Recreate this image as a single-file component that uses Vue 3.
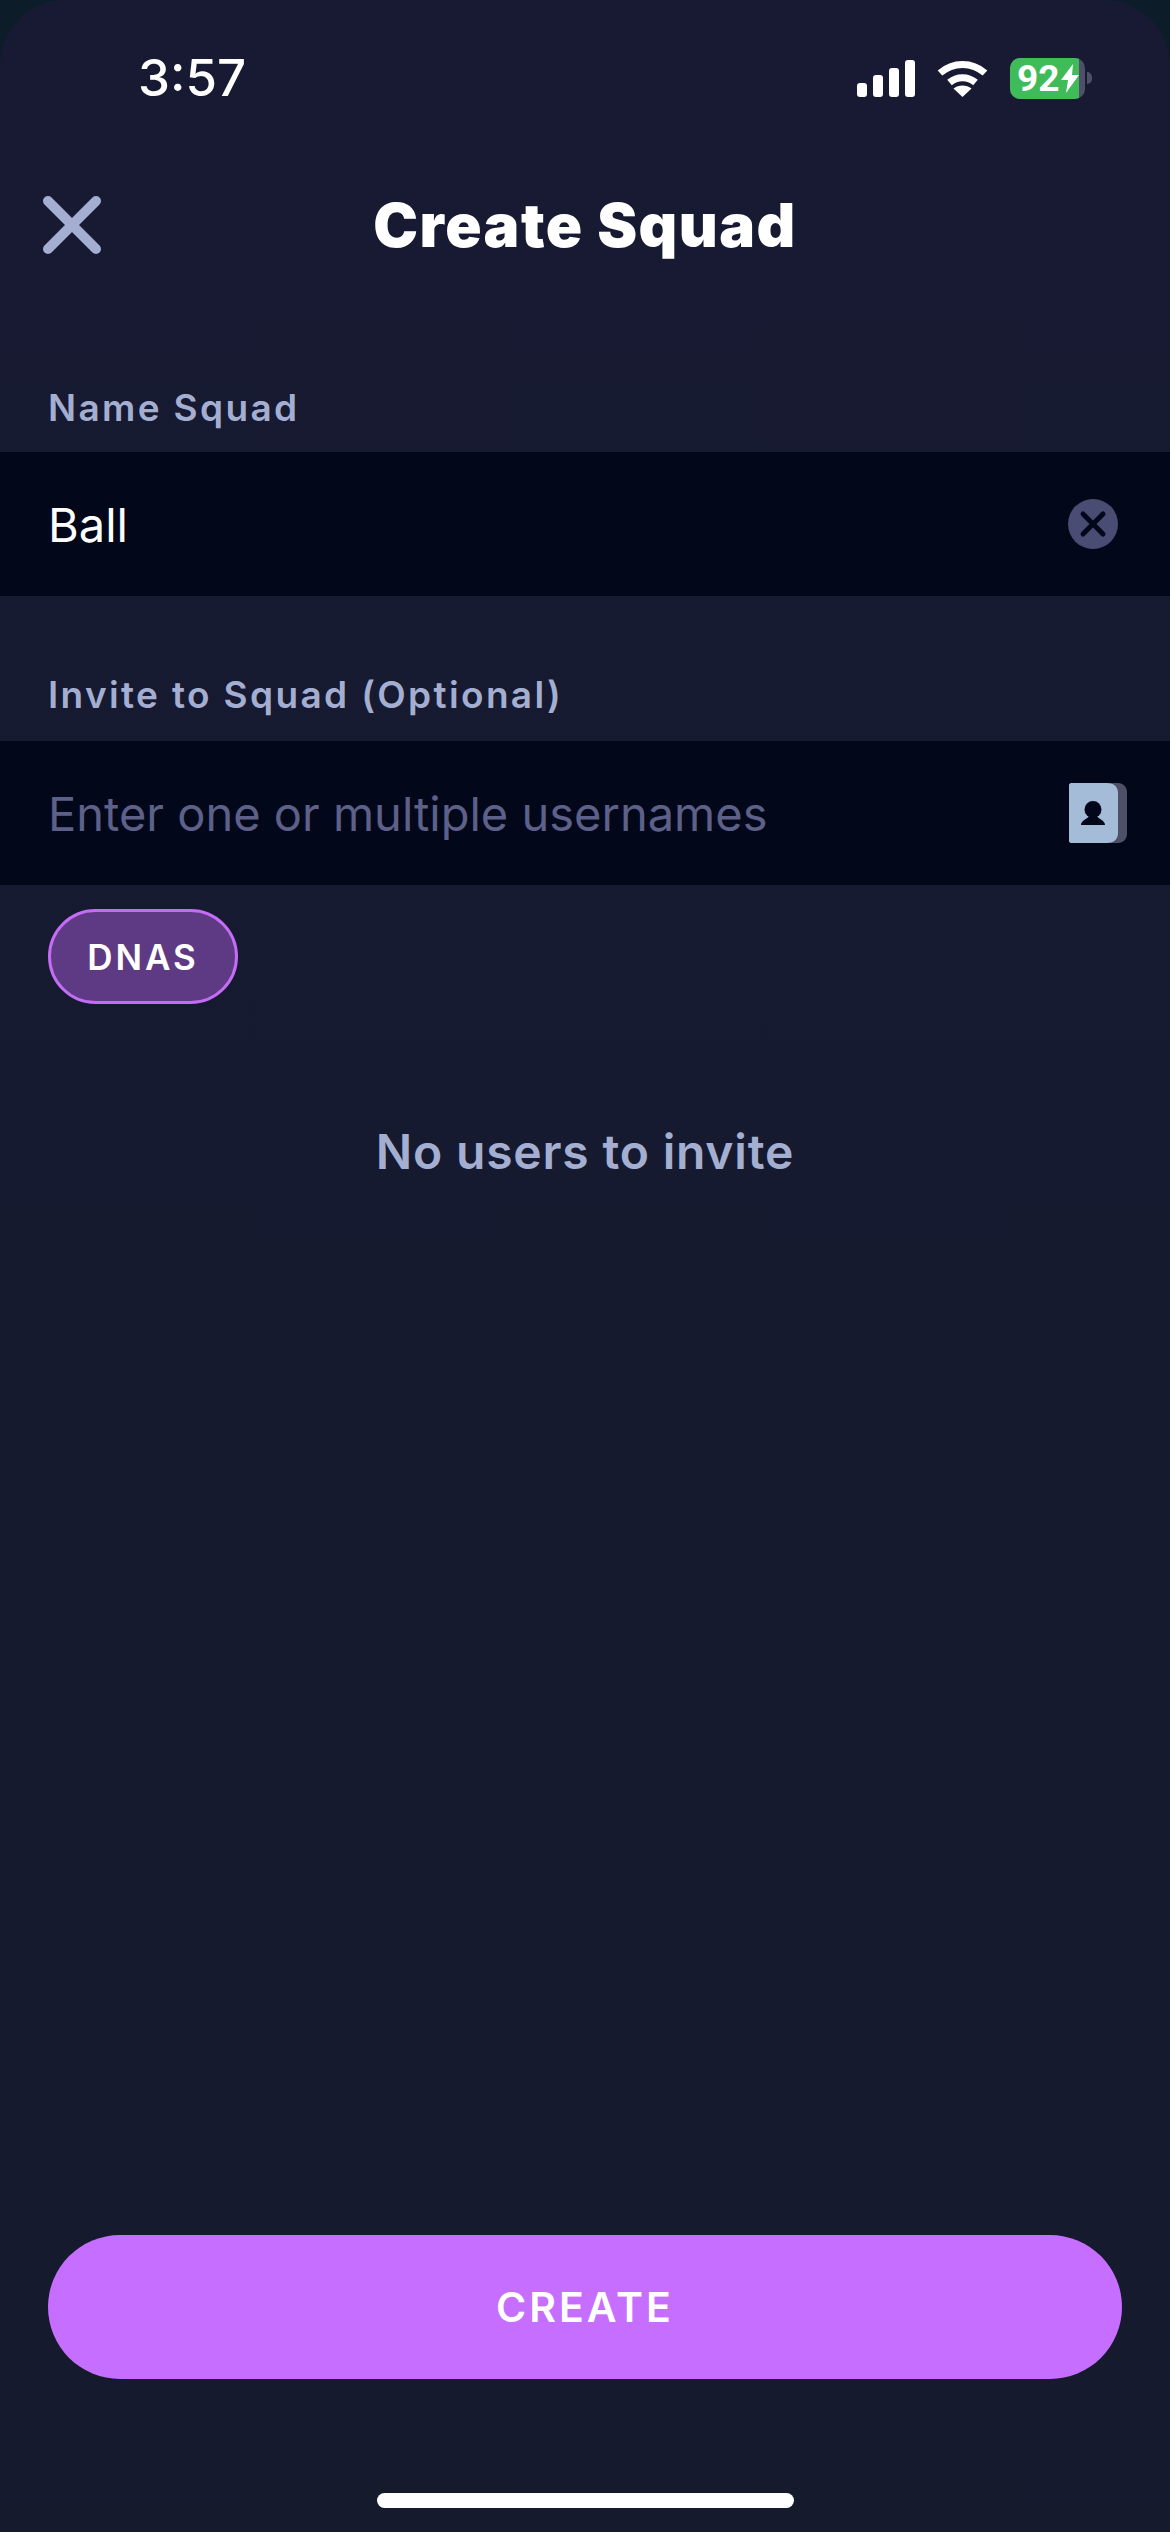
<script setup>
const bars = [14, 22, 29, 37]
</script>

<template>
  <div class="device">
    <div class="screen">
      <div class="status">
        <span class="time">3:57</span>
        <div class="status-icons">
          <div class="signal">
            <span v-for="h in bars" :key="h" class="bar" :style="{ height: h + 'px' }"></span>
          </div>
          <svg class="wifi" width="51" height="37" viewBox="0 0 51 37">
            <path d="M3 13C16 1.5 35 1.5 48 13" fill="none" stroke="#fff" stroke-width="7" />
            <path d="M12.5 22.5C20 16 31 16 38.5 22.5" fill="none" stroke="#fff" stroke-width="7" />
            <path d="M25.5 37L16.5 28.5C21.5 24.5 29.5 24.5 34.5 28.5Z" fill="#fff" />
          </svg>
          <div class="battery">
            <div class="batt-body">
              <div class="batt-fill">
                <span class="batt-num">92</span>
                <svg class="bolt" width="18" height="29" viewBox="0 0 18 29"><path d="M12 0L0 16H7L5 29L18 11H11Z" fill="#fff" /></svg>
              </div>
            </div>
            <span class="batt-tip"></span>
          </div>
        </div>
      </div>

      <header class="nav">
        <svg class="close" width="58" height="58" viewBox="0 0 58 58">
          <path d="M5 5L53 53M53 5L5 53" stroke="#a3aed0" stroke-width="10" stroke-linecap="round" />
        </svg>
        <h1>Create Squad</h1>
      </header>

      <label class="label first">Name Squad</label>
      <div class="field">
        <span class="value">Ball</span>
        <svg class="clear" width="50" height="50" viewBox="0 0 50 50">
          <circle cx="25" cy="25" r="25" fill="#4a4d73" />
          <path d="M15 15L35 35M35 15L15 35" stroke="#03071a" stroke-width="5" stroke-linecap="round" />
        </svg>
      </div>

      <label class="label second">Invite to Squad (Optional)</label>
      <div class="field">
        <span class="placeholder">Enter one or multiple usernames</span>
        <svg class="contacts" width="58" height="60" viewBox="0 0 58 60">
          <path d="M40 0H49C54 0 58 4 58 9V51C58 56 54 60 49 60H40Z" fill="#4d5066" />
          <path d="M2 0H38C45 0 49 4 49 10V50C49 56 45 60 38 60H2C1 60 0 59 0 58V2C0 1 1 0 2 0Z" fill="#a5bcd8" />
          <circle cx="24" cy="26.5" r="8.5" fill="#03071a" />
          <path d="M12 42C12 37 19 36 20 33H28C29 36 36 37 36 42Z" fill="#03071a" />
        </svg>
      </div>

      <div class="chips">
        <span class="chip">DNAS</span>
      </div>

      <p class="empty">No users to invite</p>

      <div class="footer">
        <button class="create" type="button">CREATE</button>
      </div>

      <div class="home-wrap"><span class="home"></span></div>
    </div>
  </div>
</template>

<style>
html, body { margin: 0; background: #0c1c28; }
</style>

<style scoped>
.device {
  width: 1170px;
  height: 2532px;
  background: #0c1c28;
  overflow: hidden;
}
.screen {
  height: 2532px;
  background: linear-gradient(#171a32, #151a2d);
  border-radius: 66px 66px 0 0;
  display: flex;
  flex-direction: column;
  font-family: "Inter", "Noto Sans", sans-serif;
  color: #fff;
}
.status {
  height: 156px;
  padding: 0 78px 0 138px;
  display: flex;
  align-items: center;
  justify-content: space-between;
  flex: none;
  box-sizing: border-box;
}
.time {
  font-size: 51px;
  font-weight: 500;
  line-height: 50px;
}
.status-icons { display: flex; align-items: center; gap: 22px; }
.signal { display: flex; align-items: flex-end; gap: 6px; height: 37px; }
.bar { width: 10px; background: #fff; border-radius: 3px; }
.battery { display: flex; align-items: center; }
.batt-body { width: 75px; height: 41px; background: #4d5066; border-radius: 10px; overflow: hidden; }
.batt-fill {
  width: 69px;
  height: 41px;
  background: #3fbb5a;
  display: flex;
  align-items: center;
  padding-left: 7px;
  box-sizing: border-box;
}
.batt-num { font-family: "Roboto", sans-serif; font-size: 37px; font-weight: 700; line-height: 41px; margin-right: 2px; }
.bolt { flex: none; }
.batt-tip { width: 5px; height: 12px; background: #4d5066; border-radius: 0 6px 6px 0; margin-left: 2px; }
.nav {
  height: 100px;
  margin-top: 19px;
  position: relative;
  display: flex;
  align-items: center;
  justify-content: center;
  flex: none;
}
.close { position: absolute; left: 43px; top: 21px; }
h1 { margin: 0; font-size: 60px; font-weight: 900; letter-spacing: 1.5px; line-height: 72px; }
.label {
  display: block;
  margin-left: 48px;
  color: #a3aed0;
  font-size: 37px;
  font-weight: 600;
  letter-spacing: 2.35px;
  line-height: 44px;
}
.first { margin-top: 111px; margin-bottom: 22px; }
.second { margin-top: 77px; margin-bottom: 24px; }
.field {
  height: 144px;
  background: #03071a;
  padding: 0 52px 0 48px;
  display: flex;
  align-items: center;
  justify-content: space-between;
  flex: none;
  font-size: 47px;
}
.placeholder { color: #5d6088; }
.contacts { margin-right: -9px; }
.chips { padding: 24px 48px 0; display: flex; }
.chip {
  width: 190px;
  height: 95px;
  box-sizing: border-box;
  border: 3px solid #c46cf5;
  background: #5e3a84;
  border-radius: 48px;
  display: flex;
  align-items: center;
  justify-content: center;
  font-size: 35px;
  font-weight: 600;
  letter-spacing: 3px;
}
.empty {
  margin: 118px 0 0;
  text-align: center;
  color: #a3aed0;
  font-size: 48px;
  font-weight: 600;
  letter-spacing: 0.8px;
  line-height: 60px;
}
.footer { margin-top: auto; padding: 0 48px; }
.create {
  display: block;
  width: 100%;
  height: 144px;
  border: 0;
  border-radius: 72px;
  background: #c66eff;
  color: #fff;
  font-family: inherit;
  font-size: 41px;
  font-weight: 600;
  letter-spacing: 3px;
}
.home-wrap { height: 153px; display: flex; justify-content: center; align-items: flex-end; padding-bottom: 24px; box-sizing: border-box; flex: none; }
.home { width: 417px; height: 15px; border-radius: 8px; background: #fff; }
</style>
